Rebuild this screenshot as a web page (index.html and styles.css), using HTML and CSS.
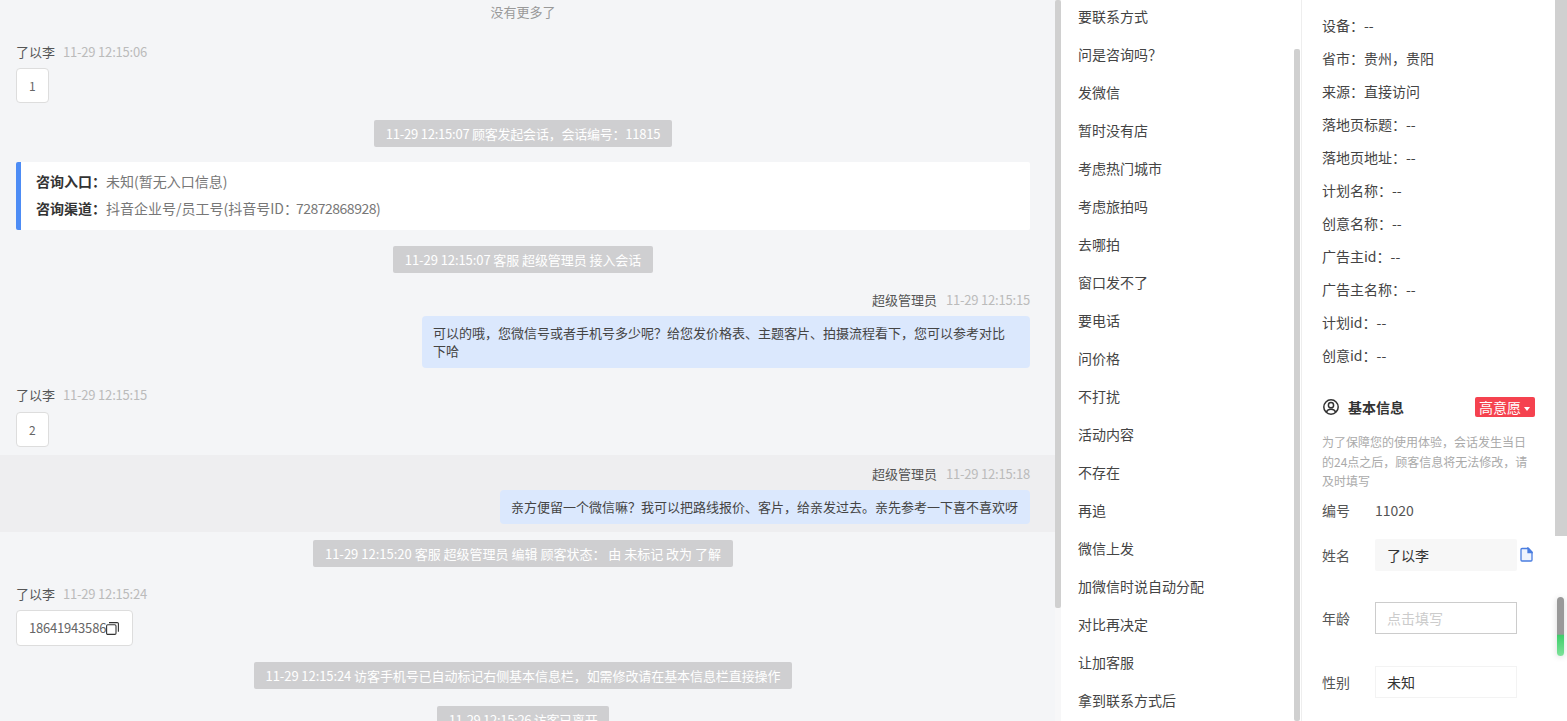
FILE: index.html
```html
<!DOCTYPE html>
<html>
<head>
	<title></title>
	<meta charset="utf-8">
	<link rel="stylesheet" href="styles.css">
</head>
<body>
	<div class="page">
		<div class="chat">
			<div class="no-more">没有更多了</div>

			<div class="msg msg-first">
				<div class="head"><span class="name">了以李</span><span class="time">11-29 12:15:06</span></div>
				<div class="bubble">1</div>
			</div>

			<div class="notice n1"><span>11-29 12:15:07 顾客发起会话，会话编号：11815</span></div>

			<div class="info">
				<div class="info-row"><b>咨询入口：</b>未知(暂无入口信息)</div>
				<div class="info-row"><b>咨询渠道：</b>抖音企业号/员工号(抖音号ID：<span class="num">72872868928)</span></div>
			</div>

			<div class="notice n2"><span>11-29 12:15:07 客服 超级管理员 接入会话</span></div>

			<div class="msg-right m1">
				<div class="head"><span class="name">超级管理员</span><span class="time">11-29 12:15:15</span></div>
				<div class="bubble-blue wide">可以的哦，您微信号或者手机号多少呢？给您发价格表、主题客片、拍摄流程看下，您可以参考对比下哈</div>
			</div>

			<div class="msg m2">
				<div class="head"><span class="name">了以李</span><span class="time">11-29 12:15:15</span></div>
				<div class="bubble">2</div>
			</div>

			<div class="msg-right active">
				<div class="head"><span class="name">超级管理员</span><span class="time">11-29 12:15:18</span></div>
				<div class="bubble-blue">亲方便留一个微信嘛？我可以把路线报价、客片，给亲发过去。亲先参考一下喜不喜欢呀</div>
			</div>

			<div class="notice n3"><span>11-29 12:15:20 客服 超级管理员 编辑 顾客状态： 由 未标记 改为 了解</span></div>

			<div class="msg m3">
				<div class="head"><span class="name">了以李</span><span class="time">11-29 12:15:24</span></div>
				<div class="bubble phone">18641943586<svg class="copy" width="13" height="13" viewBox="0 0 13 13" fill="none" stroke="#333" stroke-width="1.1"><rect x="0.6" y="2.8" width="9.400" height="9.600" rx="1.200"/><path d="M3 .6h8.200a1.200 1.200 0 0 1 1.200 1.200v8"/></svg></div>
			</div>

			<div class="notice n4"><span>11-29 12:15:24 访客手机号已自动标记右侧基本信息栏，如需修改请在基本信息栏直接操作</span></div>
			<div class="notice n5"><span>11-29 12:15:26 访客已离开</span></div>
		</div>
		<div class="bar-track-chat"><div class="bar bar-chat"></div></div>

		<div class="quick">
			<div class="quick-item">要联系方式</div>
			<div class="quick-item">问是咨询吗？</div>
			<div class="quick-item">发微信</div>
			<div class="quick-item">暂时没有店</div>
			<div class="quick-item">考虑热门城市</div>
			<div class="quick-item">考虑旅拍吗</div>
			<div class="quick-item">去哪拍</div>
			<div class="quick-item">窗口发不了</div>
			<div class="quick-item">要电话</div>
			<div class="quick-item">问价格</div>
			<div class="quick-item">不打扰</div>
			<div class="quick-item">活动内容</div>
			<div class="quick-item">不存在</div>
			<div class="quick-item">再追</div>
			<div class="quick-item">微信上发</div>
			<div class="quick-item">加微信时说自动分配</div>
			<div class="quick-item">对比再决定</div>
			<div class="quick-item">让加客服</div>
			<div class="quick-item">拿到联系方式后</div>
		</div>
		<div class="bar-track"><div class="bar bar-quick"></div></div>

		<div class="side">
			<div class="side-row">设备：--</div>
			<div class="side-row">省市：贵州，贵阳</div>
			<div class="side-row">来源：直接访问</div>
			<div class="side-row">落地页标题：--</div>
			<div class="side-row">落地页地址：--</div>
			<div class="side-row">计划名称：--</div>
			<div class="side-row">创意名称：--</div>
			<div class="side-row">广告主id：--</div>
			<div class="side-row">广告主名称：--</div>
			<div class="side-row">计划id：--</div>
			<div class="side-row">创意id：--</div>

			<div class="base-head">
				<svg width="18" height="18" viewBox="0 0 18 18" fill="none" stroke="#333" stroke-width="1.5"><circle cx="9" cy="9" r="7.200"/><circle cx="9" cy="7.200" r="2.600"/><path d="M4.300 14.200c1-2 2.800-2.900 4.700-2.900s3.700.9 4.700 2.900"/></svg>
				<span class="base-title">基本信息</span>
				<span class="tag">高意愿<i class="caret"></i></span>
			</div>
			<div class="tip">为了保障您的使用体验，会话发生当日的24点之后，顾客信息将无法修改，请及时填写</div>

			<div class="field f-id"><label>编号</label><span class="value">11020</span></div>
			<div class="field f-name"><label>姓名</label><div class="input filled">了以李</div>
				<svg class="file" width="13" height="15" viewBox="0 0 13 15" fill="#eef3fd" stroke="#4a7de0" stroke-width="1.300"><path d="M2 1.500h6.500L12 5v8a1 1 0 0 1-1 1H2a1 1 0 0 1-1-1V2.500a1 1 0 0 1 1-1z"/><path d="M8 1v4.500h4z" fill="#4a7de0"/></svg>
			</div>
			<div class="field f-age"><label>年龄</label><div class="input empty">点击填写</div></div>
			<div class="field f-sex"><label>性别</label><div class="input plain">未知</div></div>
		</div>
		<div class="bar-side">
			<div class="bar-side-top"></div>
			<div class="thumb"></div>
		</div>
	</div>
</body>
</html>
```

FILE: styles.css
```css
* {
	box-sizing: border-box;
}
html, body {
	margin: 0;
	height: 100%;
	overflow: hidden;
}
body {
	font-family: "Noto Sans CJK SC", "Open Sans", sans-serif;
	font-size: 13px;
	color: #333;
}
.page {
	display: flex;
	height: 721px;
	overflow: hidden;
	background: #fff;
}

/* chat column */
.chat {
	width: 1055px;
	flex: none;
	height: 721px;
	overflow: hidden;
	background: #f4f5f7;
	padding: 0 25px 0 16px;
}
.no-more {
	height: 25px;
	line-height: 23px;
	text-align: center;
	color: #999;
}
.head {
	height: 20px;
	line-height: 20px;
}
.name {
	color: #555;
}
.time {
	color: #bbb;
	letter-spacing: -.2px;
	margin-left: 9px;
}
.msg .time {
	margin-left: 8px;
}
.msg-first {
	margin-top: 17px;
}
.bubble {
	display: inline-block;
	margin-top: 6px;
	height: 35px;
	line-height: 33px;
	padding: 0 12px;
	background: #fff;
	border: 1px solid #ddd;
	border-radius: 4px;
	color: #666;
	font-size: 12px;
}
.msg {
	height: 61px;
}
.phone {
	height: 36px;
	font-size: 13px;
	line-height: 34px;
	padding-right: 13px;
	letter-spacing: -.2px;
}
.copy {
	vertical-align: -2px;
}
.notice {
	text-align: center;
	height: 27px;
}
.notice span {
	display: inline-block;
	height: 27px;
	line-height: 27px;
	padding: 0 12px;
	background: #cfcfd1;
	color: #fff;
	border-radius: 2px;
	letter-spacing: -.08px;
}
.n1 { margin-top: 17px; }
.n2 { margin-top: 16px; }
.n3 { margin-top: 8px; }
.n4 { margin-top: 17px; }
.n5 { margin-top: 17px; }
.n1 span { letter-spacing: -.23px; }
.n3 span { letter-spacing: 0; }
.n5 span { letter-spacing: -.3px; }
.info {
	margin-top: 15px;
	height: 68px;
	padding: 6px 15px;
	background: #fff;
	border-left: 5px solid #4d8cf5;
	border-radius: 2px;
	color: #777;
	font-size: 14px;
}
.info-row {
	height: 27px;
	line-height: 27px;
}
.info-row b {
	color: #333;
}
.num {
	margin-left: -2px;
	letter-spacing: -.5px;
}
.msg-right {
	text-align: right;
}
.m1 {
	margin-top: 17px;
}
.m2 {
	margin-top: 17px;
	height: 62px;
}
.m2 .bubble {
	margin-top: 7px;
}
.m3 {
	margin-top: 17px;
}
.bubble-blue {
	display: inline-block;
	margin-top: 6px;
	padding: 7px 12px 7px 11px;
	background: #dbe8fd;
	border-radius: 4px;
	line-height: 20px;
	color: #444;
	text-align: left;
}
.wide {
	width: 608px;
	height: 52px;
	padding: 8px 24px 8px 11px;
	line-height: 18px;
}
.active {
	margin: 8px -25px 0 -16px;
	padding: 9px 25px 8px 16px;
	height: 77px;
	background: #eeeef0;
}

/* scroll bars */
.bar {
	background: #d0d0d0;
	border-radius: 2px;
}
.bar-track-chat {
	width: 6px;
	flex: none;
	background: #f7f7f8;
}
.bar-chat {
	height: 608px;
}

/* quick replies */
.quick {
	width: 233px;
	flex: none;
	height: 721px;
	overflow: hidden;
	padding: 0 0 0 17px;
	background: #fff;
	font-size: 14px;
}
.quick-item {
	height: 38px;
	line-height: 33px;
	color: #444;
}
.bar-track {
	width: 6px;
	flex: none;
	padding-top: 49px;
}
.bar-quick {
	height: 100%;
}

/* right panel */
.side {
	width: 254px;
	flex: none;
	height: 721px;
	margin-left: 1px;
	overflow: hidden;
	padding: 9px 20px 0 20px;
	border-left: 1px solid #eee;
	font-size: 14px;
}
.side-row {
	height: 33px;
	line-height: 33px;
	color: #444;
}
.base-head {
	display: flex;
	align-items: center;
	margin-top: 23px;
	height: 24px;
}
.base-title {
	margin-left: 8px;
	font-weight: bold;
	color: #333;
}
.tag {
	margin-left: auto;
	height: 20px;
	line-height: 20px;
	padding: 0 5px 0 4px;
	background: #f5424f;
	color: #fff;
	border-radius: 2px;
}
.caret {
	display: inline-block;
	margin-left: 3px;
	vertical-align: 2px;
	border: 3px solid transparent;
	border-top: 4px solid #fff;
	border-bottom: 0;
}
.tip {
	margin-top: 13px;
	font-size: 12px;
	line-height: 19.500px;
	color: #aaa;
}
.field {
	display: flex;
	align-items: center;
	color: #555;
}
.field label {
	width: 53px;
	flex: none;
}
.value {
	color: #555;
}
.f-id {
	margin-top: 7px;
	height: 24px;
}
.f-name {
	margin-top: 17px;
}
.f-age {
	margin-top: 31px;
}
.f-sex {
	margin-top: 32px;
}
.input {
	width: 142px;
	height: 32px;
	line-height: 30px;
	padding: 0 11px;
	border: 1px solid transparent;
	color: #333;
}
.filled {
	background: #f7f7f7;
	border-radius: 2px;
}
.empty {
	border-color: #ccc;
	color: #ccc;
}
.plain {
	border-color: #f3f3f3;
}
.file {
	margin-left: 3px;
	flex: none;
}
.bar-side {
	width: 12px;
	flex: none;
	display: flex;
	flex-direction: column;
}
.bar-side-top {
	height: 536px;
	background: #d0d0d0;
}
.thumb {
	width: 7px;
	height: 59px;
	margin: 61px 0 0 2px;
	border-radius: 4px;
	background: linear-gradient(#999 0, #999 63%, #3fce6b 65%, #7ee29a 100%);
	box-shadow: 0 1px 6px rgba(0, 0, 0, .15);
}
```
